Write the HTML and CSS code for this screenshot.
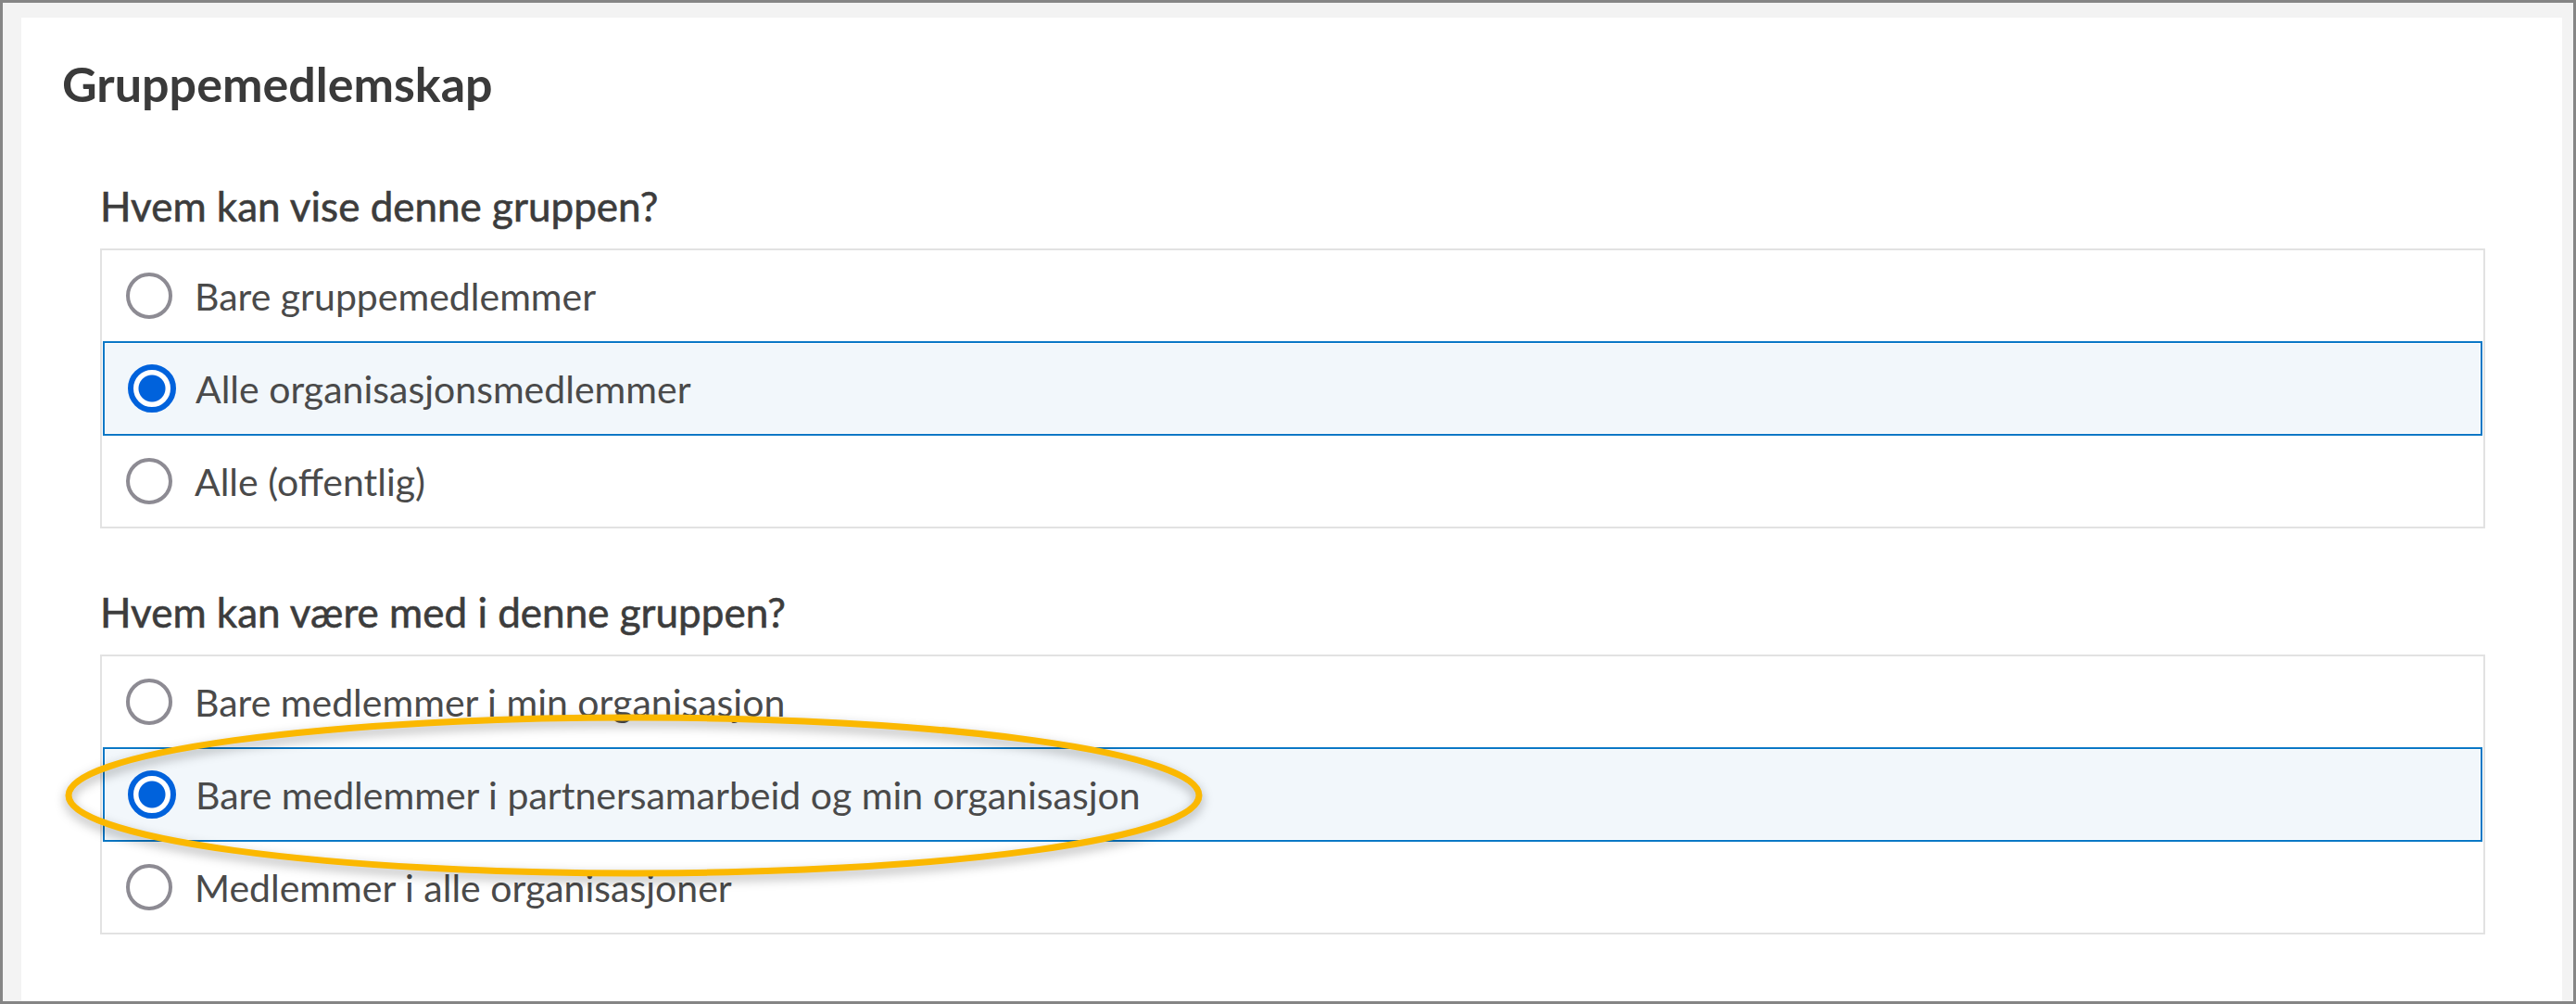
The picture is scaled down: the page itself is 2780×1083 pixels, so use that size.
FILE: index.html
```html
<!DOCTYPE html>
<html lang="no">
<head>
<meta charset="utf-8">
<title>Gruppemedlemskap</title>
<link rel="stylesheet" href="styles.css">
</head>
<body>
<div class="frame">
  <div class="panel">
    <h2 class="title">Gruppemedlemskap</h2>

    <section class="group first">
      <h3 class="question">Hvem kan vise denne gruppen?</h3>
      <div class="options">
        <div class="option"><span class="radio"></span><span class="label">Bare gruppemedlemmer</span></div>
        <div class="option selected"><span class="radio checked"></span><span class="label">Alle organisasjonsmedlemmer</span></div>
        <div class="option"><span class="radio"></span><span class="label">Alle (offentlig)</span></div>
      </div>
    </section>

    <section class="group second">
      <h3 class="question">Hvem kan være med i denne gruppen?</h3>
      <div class="options annotated">
        <div class="option"><span class="radio"></span><span class="label">Bare medlemmer i min organisasjon</span></div>
        <div class="option selected"><span class="radio checked"></span><span class="label">Bare medlemmer i partnersamarbeid og min organisasjon</span></div>
        <div class="option"><span class="radio"></span><span class="label">Medlemmer i alle organisasjoner</span></div>
        <svg class="highlight" width="1250" height="200" viewBox="0 0 1250 200" aria-hidden="true">
          <ellipse cx="617" cy="100" rx="610" ry="84" fill="none" stroke="#fbb800" stroke-width="7"/>
        </svg>
      </div>
    </section>
  </div>
</div>
</body>
</html>
```

FILE: styles.css
```css
* { box-sizing: border-box; }

html, body {
  margin: 0;
  padding: 0;
  background: #ffffff;
}

.frame {
  width: 2780px;
  height: 1083px;
  border: 3px solid #858585;
  background: #f3f3f3;
  padding: 16px 12px 0 20px;
  font-family: Lato, "Liberation Sans", sans-serif;
  color: #4a4a4a;
}

.panel {
  height: 100%;
  background: #ffffff;
  padding: 40px 83px 0 85px;
}

.title {
  margin: 0 0 0 -41px;
  font-size: 52px;
  line-height: 62px;
  font-weight: 700;
  color: #3a3a3a;
}

.group.first { margin-top: 75px; }
.group.second { margin-top: 64px; }

.question {
  margin: 0 0 20px 0;
  font-size: 44px;
  line-height: 52px;
  font-weight: 400;
  color: #3c3c3c;
  -webkit-text-stroke: 0.6px #3c3c3c;
}

.options {
  position: relative;
  height: 302px;
  border: 2px solid #e2e2e2;
  display: flex;
  flex-direction: column;
}

.option {
  flex: 1;
  display: flex;
  align-items: center;
  gap: 24px;
  padding-left: 26px;
  font-size: 41px;
  color: #4a4a4a;
}

.option.selected {
  margin: 0 1px;
  padding-left: 25px;
  gap: 21px;
  border: 2px solid #0b78c6;
  box-shadow: inset 0 0 0 1px #ffffff;
  background: #f2f7fb;
}

.radio {
  flex: none;
  width: 50px;
  height: 50px;
  border-radius: 50%;
  border: 4px solid #8d8b93;
  background: #ffffff;
}

.radio.checked {
  width: 52px;
  height: 52px;
  border: 6px solid #0062dc;
  background: radial-gradient(circle, #0062dc 0 14px, #ffffff 15px);
}

.label { white-space: nowrap; }

.highlight {
  position: absolute;
  left: -43px;
  top: 50px;
  overflow: visible;
  filter: drop-shadow(0 5px 6px rgba(0, 0, 0, 0.32));
  pointer-events: none;
}
```
